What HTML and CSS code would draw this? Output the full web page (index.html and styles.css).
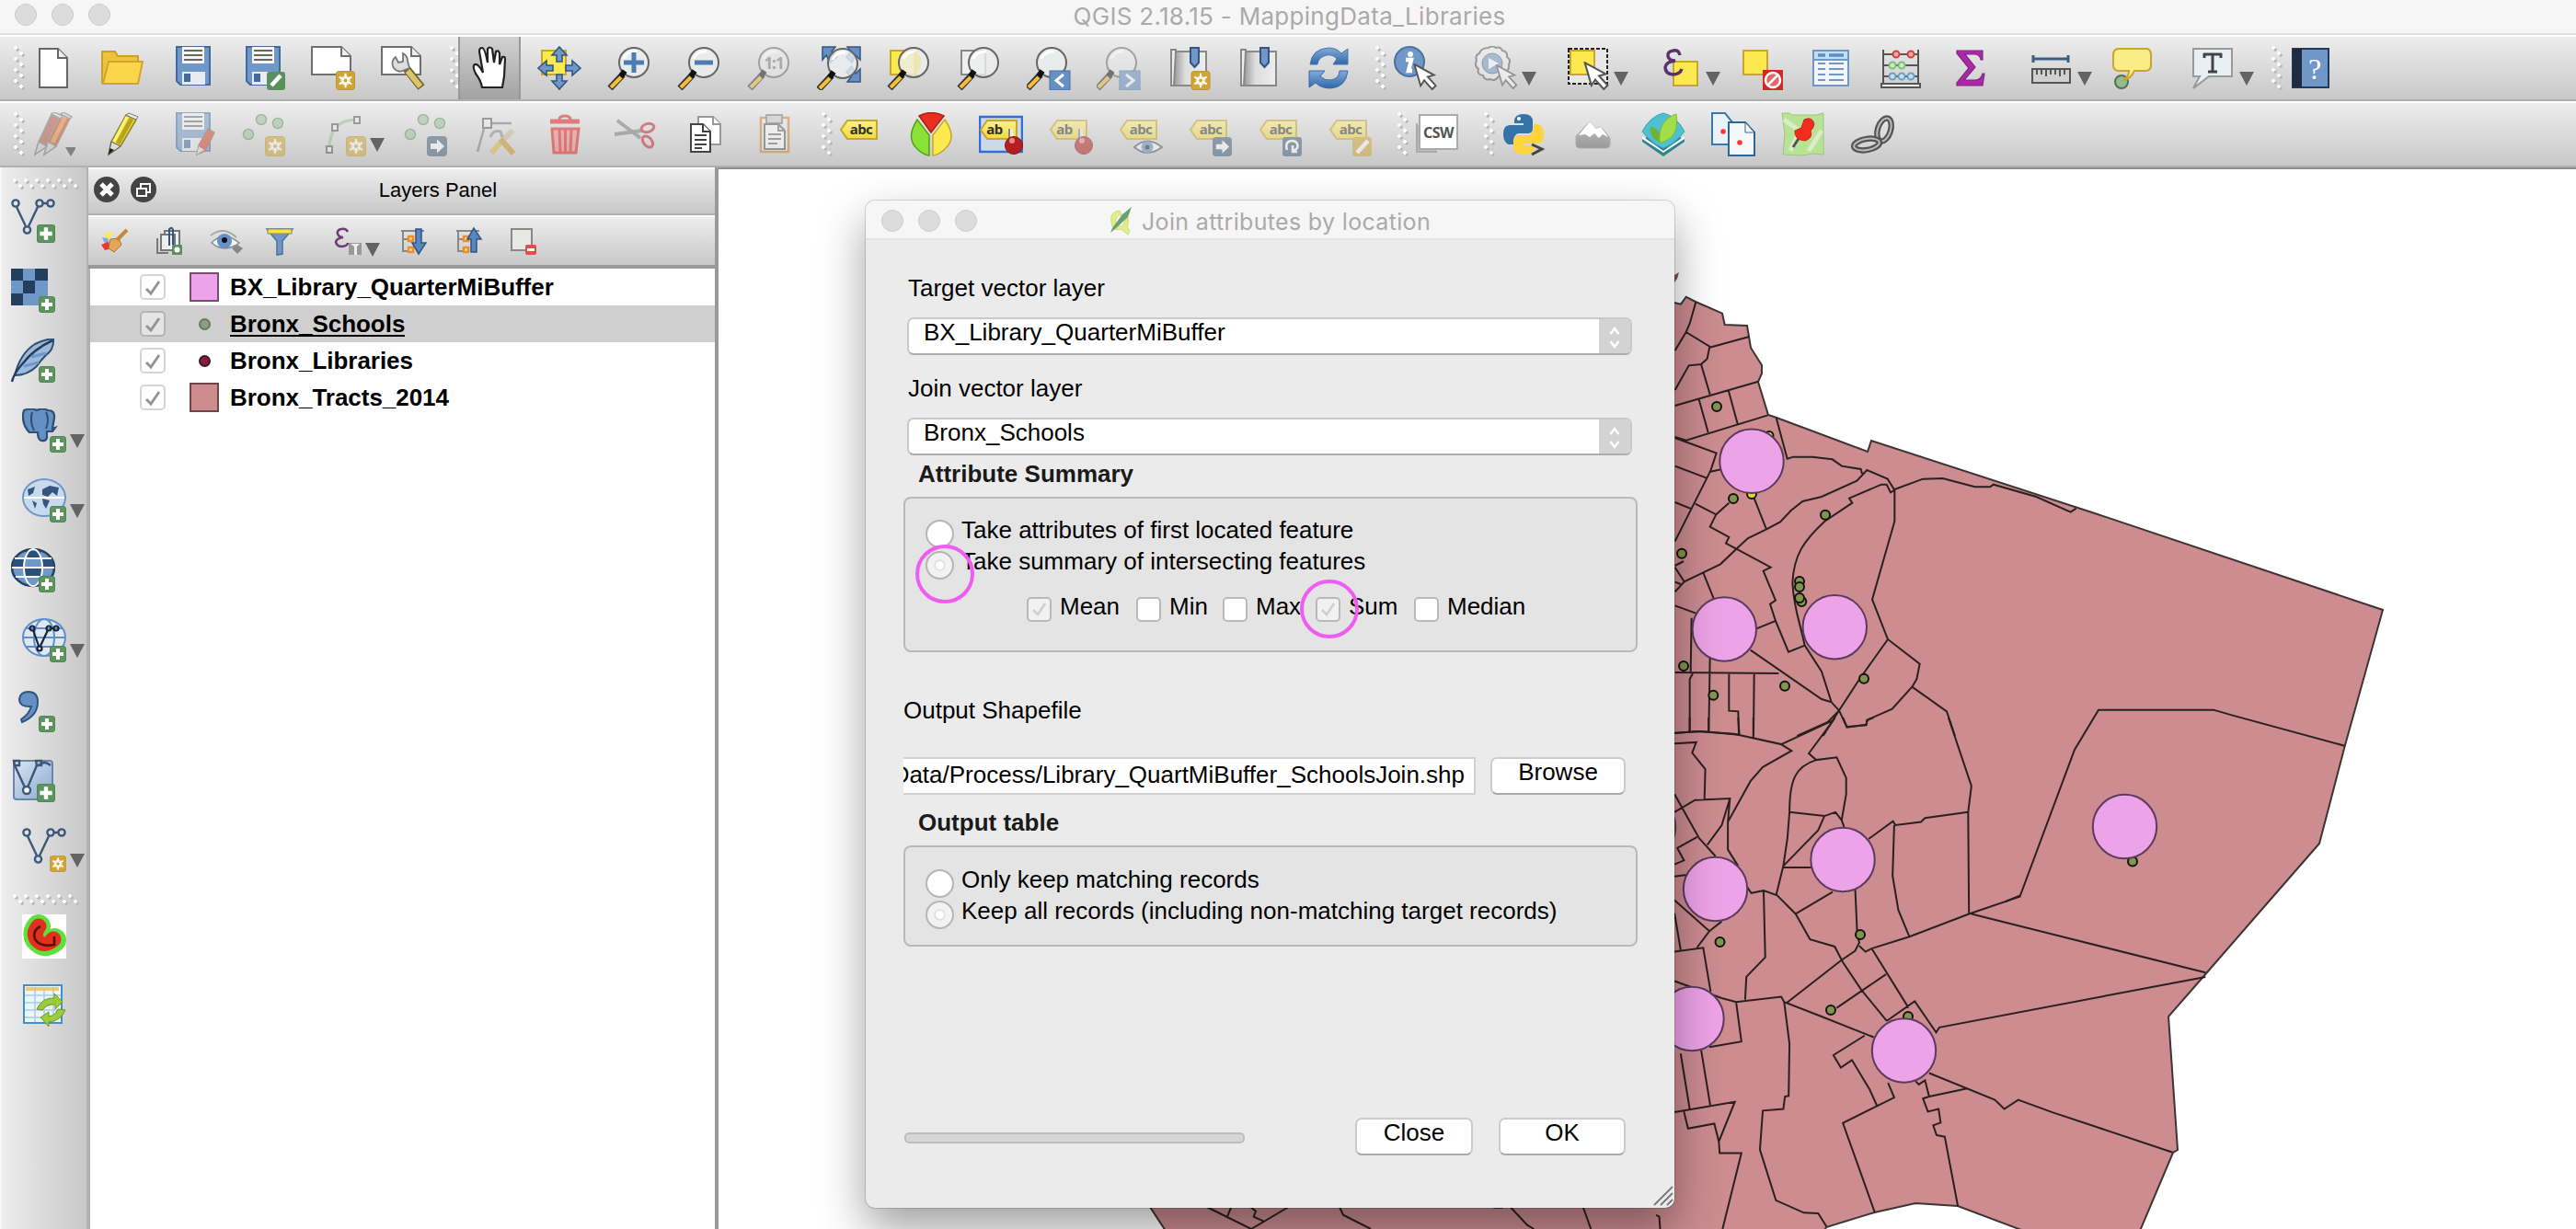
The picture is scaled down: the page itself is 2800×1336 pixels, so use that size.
FILE: index.html
```html
<!DOCTYPE html>
<html lang="en">
<head>
<meta charset="utf-8">
<title>QGIS 2.18.15 - MappingData_Libraries</title>
<link rel="stylesheet" href="styles.css">
</head>
<body>
<svg class="defs" aria-hidden="true">
<defs>
<linearGradient id="gBlue" x1="0" y1="0" x2="0" y2="1"><stop offset="0" stop-color="#84aada"/><stop offset="1" stop-color="#2f67a8"/></linearGradient>
<linearGradient id="gBook" x1="0" y1="0" x2="1" y2="0"><stop offset="0" stop-color="#999"/><stop offset=".35" stop-color="#ddd"/><stop offset="1" stop-color="#eee"/></linearGradient>
<linearGradient id="gTag" x1="0" y1="0" x2="0" y2="1"><stop offset="0" stop-color="#fdf08a"/><stop offset="1" stop-color="#f2da3a"/></linearGradient>
<linearGradient id="gPale" x1="0" y1="0" x2="1" y2="1"><stop offset="0" stop-color="#dde5ee"/><stop offset="1" stop-color="#86a9d4"/></linearGradient>
<linearGradient id="gGrey" x1="0" y1="0" x2="0" y2="1"><stop offset="0" stop-color="#c4c4c4"/><stop offset="1" stop-color="#999"/></linearGradient>

<symbol id="plus" viewBox="0 0 18 18"><rect x=".5" y=".5" width="17" height="17" rx="2.5" fill="#5f9460" stroke="#4d8a4f"/><path d="M9 3V15M3 9H15" stroke="#fff" stroke-width="4"/></symbol>
<symbol id="star" viewBox="0 0 22 22"><rect x=".5" y=".5" width="21" height="21" rx="3" fill="#cfa535" stroke="#bd9526"/><circle cx="11" cy="11" r="5.5" fill="#f4e6b8"/><path d="M11 3V19M4 7L18 15M18 7L4 15" stroke="#fff" stroke-width="2.2"/><circle cx="11" cy="11" r="2" fill="#cfa535"/></symbol>
<symbol id="go" viewBox="0 0 22 22"><rect x=".5" y=".5" width="21" height="21" rx="3" fill="#3f5d77" stroke="#3f5d77"/><path d="M4 8H11V3.500L19 11L11 18.500V14H4Z" fill="#fff"/></symbol>
<symbol id="page" viewBox="0 0 48 48"><path d="M1 1H33L43 11V31H1Z" fill="#fff" stroke="#6f6f6f" stroke-width="2"/><path d="M33 1V11H43" fill="#eee" stroke="#6f6f6f" stroke-width="2"/></symbol>
<symbol id="mag" viewBox="0 0 48 48"><path d="M17 31L3 46" stroke="#333" stroke-width="7"/><path d="M15 34L4 45" stroke="#f6bd35" stroke-width="4"/><circle cx="29" cy="18" r="16" fill="#eceeed" fill-opacity=".8" stroke="#666" stroke-width="2"/><path d="M19 27L15 33" stroke="#111" stroke-width="6"/><path d="M18 14Q22 5 32 6" stroke="#fff" stroke-width="3" fill="none"/></symbol>
<symbol id="cursor" viewBox="0 0 26 30"><path d="M1 1L23 13L16 15L25 25L21 29L12 19L8 25Z" fill="#fff" stroke="#555" stroke-width="2"/></symbol>
<symbol id="vee" viewBox="0 0 48 40"><path d="M6 9L16 30M19 30L29 9M35 5H39" stroke="#3c5878" stroke-width="2.400" fill="none"/><g fill="none" stroke="#3c5878" stroke-width="2.400"><circle cx="5" cy="5" r="3.600"/><circle cx="17.500" cy="34" r="3.600"/><circle cx="31" cy="5" r="3.600"/><circle cx="43" cy="5" r="3.600"/></g></symbol>
<symbol id="tag" viewBox="0 0 48 48"><path d="M2 19L9 9H41V29H9Z" fill="url(#gTag)" stroke="#c7a52e" stroke-width="2"/></symbol>
<symbol id="floppy" viewBox="0 0 48 48"><path d="M6 1H42V42H10L6 38Z" fill="#6f98c9" stroke="#426b9c" stroke-width="2"/><rect x="12" y="1" width="24" height="18" fill="#f4f4f4"/><path d="M14 5H34M14 10H34M14 15H34" stroke="#666" stroke-width="2"/><path d="M12 28H37V42H12Z" fill="#e8ecef"/><rect x="14" y="30" width="7" height="9" fill="#426b9c"/></symbol>
<symbol id="dots" viewBox="0 0 48 48"><g fill="#9cc69d" stroke="#628a66" stroke-width="1.500"><circle cx="22" cy="8" r="5.500"/><circle cx="40" cy="12" r="5.500"/><circle cx="8" cy="24" r="5.500"/></g></symbol>

<symbol id="new" viewBox="0 0 48 48"><path d="M9 3H29L39 13V45H9Z" fill="#fff" stroke="#666" stroke-width="2"/><path d="M29 3V13H39" fill="#eee" stroke="#666" stroke-width="2"/></symbol>
<symbol id="open" viewBox="0 0 48 48"><path d="M1 41V6H15L18 11H40V17" fill="#eec33a" stroke="#c9a02b" stroke-width="2"/><path d="M8 17H45L40 41H2Z" fill="#fbd54b" stroke="#cfa62f" stroke-width="2"/></symbol>
<symbol id="save" viewBox="0 0 48 48"><use href="#floppy"/></symbol>
<symbol id="saveas" viewBox="0 0 48 48"><use href="#floppy"/><rect x="28" y="28" width="20" height="20" rx="3" fill="#5b8f5d"/><path d="M33 43L43 32" stroke="#fff" stroke-width="4.500"/></symbol>
<symbol id="newcomp" viewBox="0 0 48 48"><use href="#page"/><use href="#star" x="27" y="27" width="21" height="21"/></symbol>
<symbol id="compman" viewBox="0 0 48 48"><use href="#page"/><path d="M28 25L44 45" stroke="#6e6230" stroke-width="9"/><path d="M29 27L43 44" stroke="#dcc46a" stroke-width="6"/><path d="M16 12A8 8 0 1 0 26 26L31 24L29 16A9 9 0 0 0 24 8L24 17L19 18Z" fill="#ddd" stroke="#777" stroke-width="1.800"/></symbol>
<symbol id="hand" viewBox="0 0 48 48"><path d="M16 45Q15 38 9 30Q5 22 8 20Q12 19 17 29L13 6Q13 2 16 2Q19 2 22 18V3Q24 0 27 3L29 18L31 6Q34 4 35 8L35 20L38 12Q41 11 41 14L40 33L38 45Z" fill="#fff" stroke="#222" stroke-width="2.200"/></symbol>
<symbol id="pan" viewBox="0 0 48 48"><rect x="5" y="5" width="26" height="26" fill="#fce94f" stroke="#c7a52e" stroke-width="2"/><g fill="#6f97c8" stroke="#34557f" stroke-width="1.600"><path d="M24 1L32 10H27V17H21V10H16Z"/><path d="M24 47L32 38H27V31H21V38H16Z"/><path d="M1 24L10 16V21H17V27H10V32Z"/><path d="M47 24L38 16V21H31V27H38V32Z"/></g></symbol>
<symbol id="zin" viewBox="0 0 48 48"><use href="#mag"/><path d="M29 7V29M18 18H40" stroke="#4c7cb0" stroke-width="5"/></symbol>
<symbol id="zout" viewBox="0 0 48 48"><use href="#mag"/><path d="M19 18H39" stroke="#4c7cb0" stroke-width="5"/></symbol>
<symbol id="zone" viewBox="0 0 48 48"><use href="#mag"/><text x="29" y="25" text-anchor="middle" class="t-one">1:1</text></symbol>
<symbol id="zfull" viewBox="0 0 48 48"><g fill="#6490c4" stroke="#34557f" stroke-width="1.500"><path d="M6 1H20L16 6L22 12L14 18L10 10L6 15Z"/><path d="M47 1H33L37 6L32 12L38 18L42 10L47 15Z"/><path d="M47 39H33L37 34L32 28L38 22L42 30L47 25Z"/></g><use href="#mag" x="-1" y="1"/></symbol>
<symbol id="zsel" viewBox="0 0 48 48"><rect x="4" y="5" width="28" height="26" fill="#fce94f" stroke="#c7a52e" stroke-width="2"/><use href="#mag"/><path d="M29 5V31A14 14 0 0 0 29 5" fill="#efe6a4" opacity=".7"/></symbol>
<symbol id="zlay" viewBox="0 0 48 48"><rect x="5" y="5" width="26" height="26" fill="#eee" stroke="#888" stroke-width="2"/><use href="#mag"/></symbol>
<symbol id="zlast" viewBox="0 0 48 48"><use href="#mag" x="-2"/><rect x="25" y="27" width="22" height="21" fill="#6490c4" stroke="#49719f"/><path d="M40 31L32 37.500L40 44" fill="none" stroke="#fff" stroke-width="3"/></symbol>
<symbol id="znext" viewBox="0 0 48 48"><use href="#mag" x="-2"/><rect x="25" y="27" width="22" height="21" fill="#6490c4" stroke="#49719f"/><path d="M32 31L40 37.500L32 44" fill="none" stroke="#fff" stroke-width="3"/></symbol>
<symbol id="book" viewBox="0 0 48 48"><path d="M5 4H10V43H5Z" fill="#eee" stroke="#888" stroke-width="2"/><path d="M10 6H43V43H8Z" fill="url(#gBook)" stroke="#888" stroke-width="2"/><path d="M26 2H35V18L30.500 23L26 18Z" fill="#6f98c9" stroke="#34557f" stroke-width="2"/></symbol>
<symbol id="booknew" viewBox="0 0 48 48"><use href="#book"/><use href="#star" x="26" y="27" width="22" height="21"/></symbol>
<symbol id="refresh" viewBox="0 0 48 48"><path d="M4 20Q6 3 24 2Q33 2 38 8L45 3V20H29L33 14Q29 9 22 10Q13 12 12 20Z" fill="url(#gBlue)" stroke="#4a78ae"/><path d="M45 27Q43 45 26 46Q16 46 10 40L3 45V27H20L15 33Q20 38 27 37Q36 35 36 27Z" fill="url(#gBlue)" stroke="#3a6aa4"/></symbol>
<symbol id="ident" viewBox="0 0 48 48"><circle cx="18" cy="17" r="16" fill="#6f97c8" stroke="#49719f" stroke-width="2"/><circle cx="19" cy="9" r="3" fill="#fff"/><path d="M14 15H20L17 27H21" fill="none" stroke="#fff" stroke-width="4.500"/><use href="#cursor" x="22" y="19" width="26" height="29"/></symbol>
<symbol id="action" viewBox="0 0 48 48"><path d="M16 2Q20-1 24 2Q29 0 31 5Q37 6 36 12Q41 15 38 20Q39 26 34 28Q33 34 27 33Q23 39 18 36Q12 38 10 32Q3 31 5 25Q0 21 3 16Q1 10 6 8Q8 2 16 2Z" fill="#eee" stroke="#555" stroke-width="2"/><circle cx="20" cy="19" r="11" fill="#6f97c8" stroke="#557"/><path d="M16 13L27 19L16 25Z" fill="#fff"/><use href="#cursor" x="23" y="20" width="25" height="27"/></symbol>
<symbol id="select" viewBox="0 0 48 48"><rect x="3" y="3" width="42" height="38" fill="#e8e8e8" stroke="#222" stroke-width="2" stroke-dasharray="4 2"/><rect x="5" y="5" width="26" height="26" fill="#fce94f" stroke="#c7a52e" stroke-width="2"/><use href="#cursor" x="19" y="17" width="28" height="31"/></symbol>
<symbol id="expr" viewBox="0 0 48 48"><rect x="17" y="17" width="26" height="26" fill="#fce94f" stroke="#c7a52e" stroke-width="2"/><path d="M24 10Q23 4 17 5Q10 6 11 11Q12 16 19 16Q9 17 8 23Q8 30 16 31Q24 31 26 25" fill="none" stroke="#5d3168" stroke-width="3.500"/></symbol>
<symbol id="desel" viewBox="0 0 48 48"><rect x="5" y="5" width="26" height="26" fill="#fce94f" stroke="#c7a52e" stroke-width="2"/><rect x="26" y="26" width="22" height="22" fill="#cf2a27"/><circle cx="37" cy="37" r="8" fill="#e06a67" stroke="#fff" stroke-width="2.500"/><path d="M32 42L42 32" stroke="#fff" stroke-width="2.500"/></symbol>
<symbol id="table" viewBox="0 0 48 48"><rect x="5" y="5" width="38" height="38" fill="#f2f5f8" stroke="#6f97c8" stroke-width="2"/><rect x="6" y="6" width="36" height="9" fill="#bfe0f2"/><path d="M5 15H43" stroke="#6f97c8" stroke-width="2"/><path d="M10 10H18M22 10H38" stroke="#5d8dc6" stroke-width="3.500"/><path d="M10 19H18M22 19H38M10 25H18M22 25H38M10 31H18M22 31H38M10 37H18M22 37H38" stroke="#6f97c8" stroke-width="2"/></symbol>
<symbol id="abacus" viewBox="0 0 48 48"><path d="M5 4V41M43 4V41M5 9H43M5 21H43M5 33H43" stroke="#555" stroke-width="2"/><rect x="3" y="41" width="42" height="4" fill="#eee" stroke="#555" stroke-width="2"/><g fill="#f4a7a5" stroke="#c44" stroke-width="2"><circle cx="19" cy="9" r="3.500"/><circle cx="35" cy="9" r="3.500"/></g><g fill="#c4f0c0" stroke="#7fbf7d" stroke-width="2"><circle cx="15" cy="21" r="3.500"/><circle cx="25" cy="21" r="3.500"/></g><g fill="#c4dff0" stroke="#6d9fc0" stroke-width="2"><circle cx="15" cy="33" r="3.500"/><circle cx="25" cy="33" r="3.500"/><circle cx="35" cy="33" r="3.500"/></g></symbol>
<symbol id="sigma" viewBox="0 0 48 48"><path d="M9 5H37V15H35Q34 9 28 9H18L29 23L17 37H29Q35 37 37 30H39L37 43H9V40L22 24L9 8Z" fill="#ae26a9" stroke="#7c2b7c" stroke-width="1.200"/></symbol>
<symbol id="measure" viewBox="0 0 48 48"><path d="M4 14H42M4 10V18M42 10V18" stroke="#3f5d80" stroke-width="3"/><rect x="3" y="25" width="41" height="15" fill="#d0d0d0" stroke="#555" stroke-width="2"/><path d="M8 26V31M13 26V31M18 26V33M23 26V31M28 26V31M33 26V33M38 26V31" stroke="#555" stroke-width="2"/></symbol>
<symbol id="tip" viewBox="0 0 48 48"><circle cx="12" cy="39" r="7" fill="#93bd8c" stroke="#4f7350" stroke-width="2"/><path d="M9 3H39Q44 3 44 10V20Q44 27 38 27H26Q22 36 14 37Q20 33 20 27H9Q3 27 3 20V10Q3 3 9 3Z" fill="#faec86" stroke="#c7a52e" stroke-width="2"/></symbol>
<symbol id="annot" viewBox="0 0 48 48"><path d="M2 3H44V33H19L2 46L9 33H2Z" fill="#e9f0f4" stroke="#999" stroke-width="2"/><path d="M13 9H33M14 8V13M32 8V13M23 9V28M18 28H28" stroke="#444" stroke-width="3"/></symbol>
<symbol id="help" viewBox="0 0 48 48"><rect x="4" y="3" width="39" height="42" fill="#6f98c9" stroke="#223a58" stroke-width="2"/><rect x="4" y="3" width="10" height="42" fill="#1d2c40"/><text x="28" y="36" text-anchor="middle" class="t-help">?</text></symbol>

<symbol id="pencils" viewBox="0 0 48 48"><g stroke="#777" stroke-width="1.500"><path d="M4 46L8 32L22 2L32 7L17 37Z" fill="#b4503c"/><path d="M14 46L18 32L32 2L42 7L27 37Z" fill="#cc3a20"/><path d="M4 46L8 32L17 37ZM14 46L18 32L27 37Z" fill="#ccc"/><path d="M22 2L25 0L34 4L32 7ZM32 2L35 0L44 5L42 7Z" fill="#eee"/></g><path d="M23 33L37 5" stroke="#e8822c" stroke-width="5"/><path d="M37 38H49L43 48Z" fill="#333"/></symbol>
<symbol id="pencil" viewBox="0 0 48 48"><path d="M8 46L11 32L27 3L38 8L21 37Z" fill="#f0dc3c" stroke="#8e8426" stroke-width="1.500"/><path d="M18 34L33 7" stroke="#b5a51f" stroke-width="5"/><path d="M14 32L28 5" stroke="#fff27a" stroke-width="3"/><path d="M27 3L30 1L40 5L38 8Z" fill="#eee" stroke="#777"/><path d="M8 46L11 32L21 37Z" fill="#ddd" stroke="#555"/><path d="M8 46L9.500 39L14 41Z" fill="#222"/></symbol>
<symbol id="savedit" viewBox="0 0 48 48"><use href="#floppy"/><path d="M28 46L30 36L40 18L47 22L37 42Z" fill="#d8401d" stroke="#8e5a4a" stroke-width="1.500"/><path d="M28 46L30 37L36 41Z" fill="#ddd"/></symbol>
<symbol id="addf" viewBox="0 0 48 48"><use href="#dots"/><use href="#star" x="26" y="26" width="22" height="22"/></symbol>
<symbol id="circ" viewBox="0 0 48 48"><path d="M8 40Q8 8 38 8" fill="none" stroke="#8ec490" stroke-width="3"/><g fill="#eee" stroke="#555" stroke-width="2"><rect x="5" y="37" width="6" height="7"/><rect x="11" y="13" width="6" height="7"/><rect x="35" y="5" width="6" height="7"/></g><use href="#star" x="26" y="26" width="22" height="22"/></symbol>
<symbol id="movef" viewBox="0 0 48 48"><use href="#dots"/><use href="#go" x="26" y="26" width="22" height="22"/></symbol>
<symbol id="node" viewBox="0 0 48 48"><path d="M16 12H42M12 18L5 43" stroke="#777" stroke-width="2.500"/><rect x="11" y="7" width="9" height="10" fill="#eee" stroke="#555" stroke-width="2"/><path d="M20 44L33 30M33 30L43 20" stroke="#dcb93a" stroke-width="6"/><path d="M33 30L44 20" stroke="#bbb" stroke-width="4"/><path d="M30 29L44 45" stroke="#c99320" stroke-width="6"/><path d="M19 27Q22 19 30 21L32 27" fill="none" stroke="#888" stroke-width="3"/></symbol>
<symbol id="trash" viewBox="0 0 48 48"><g fill="none" stroke="#e01818" stroke-width="3"><path d="M8 10H40" stroke-width="5"/><path d="M18 8Q18 4 24 4Q30 4 30 8"/><path d="M10 18H39L36 44H12Z" fill="#e88"/><path d="M18 18L19 43M24.500 18V43M31 18L30 43"/></g></symbol>
<symbol id="cut" viewBox="0 0 48 48"><path d="M5 9L30 28M2 24L32 20" stroke="#777" stroke-width="4"/><g fill="none" stroke="#c11c28" stroke-width="3"><ellipse cx="38" cy="17" rx="7" ry="4.500" transform="rotate(-15 38 17)"/><ellipse cx="38" cy="32" rx="7" ry="4.500" transform="rotate(50 38 32)"/></g></symbol>
<symbol id="copy" viewBox="0 0 48 48"><g fill="#fff" stroke="#999" stroke-width="2"><path d="M17 5H33L41 13V35H17Z"/><path d="M33 5V13H41"/></g><g fill="#fff" stroke="#444" stroke-width="2"><path d="M9 13H22L30 21V43H9Z"/><path d="M22 13V21H30M13 25H26M13 30H26M13 35H26M13 39H21"/></g></symbol>
<symbol id="paste" viewBox="0 0 48 48"><rect x="9" y="6" width="30" height="37" fill="#ececec" stroke="#c9822b" stroke-width="2.500"/><rect x="15" y="3" width="17" height="9" fill="#ccc" stroke="#777" stroke-width="2"/><path d="M13 13H28L35 20V40H13Z" fill="#fff" stroke="#555" stroke-width="2"/><path d="M28 13V20H35M17 24H31M17 29H31M17 34H27" fill="none" stroke="#666" stroke-width="2"/></symbol>
<symbol id="lbl" viewBox="0 0 48 48"><use href="#tag"/><text x="24" y="24" text-anchor="middle" class="t-abc">abc</text></symbol>
<symbol id="pie" viewBox="0 0 48 48"><path d="M24 22L11 4Q24-3 38 4Z" fill="#e8301f" stroke="#b21d12" stroke-width="1.500"/><path d="M22 25L9 8Q-4 28 9 40Q15 46 22 47Z" fill="#8ae234" stroke="#55a01c" stroke-width="1.500"/><path d="M26 25L39 8Q53 28 39 40Q33 46 26 47Z" fill="#fce94f" stroke="#c7a52e" stroke-width="1.500"/></symbol>
<symbol id="pinned" viewBox="0 0 48 48"><use href="#tag"/><text x="17" y="24" text-anchor="middle" class="t-abc">ab</text><path d="M34 18L36 30" stroke="#eee" stroke-width="5"/><path d="M33 18V28" stroke="#666" stroke-width="1.500"/><circle cx="38" cy="36" r="9.500" fill="#b51f20" stroke="#7d1415"/><circle cx="36" cy="31" r="3" fill="#e88"/></symbol>
<symbol id="pinhi" viewBox="0 0 48 48"><rect x="1" y="5" width="46" height="38" fill="#ccd9e8" stroke="#2f6fd6" stroke-width="2.500"/><use href="#pinned"/></symbol>
<symbol id="lbleye" viewBox="0 0 48 48"><use href="#lbl"/><path d="M17 38Q31 25 47 38Q31 50 17 38Z" fill="#fff" stroke="#555" stroke-width="2"/><circle cx="31" cy="38" r="6.500" fill="#5f8fc4"/><circle cx="31" cy="38" r="2.500" fill="#222"/></symbol>
<symbol id="lblmove" viewBox="0 0 48 48"><use href="#lbl"/><use href="#go" x="26" y="27" width="21" height="21"/></symbol>
<symbol id="lblrot" viewBox="0 0 48 48"><use href="#lbl"/><rect x="26" y="27" width="21" height="21" rx="3" fill="#3f5d77"/><path d="M31 41Q28 31 37 31Q44 32 42 39L38 42M37 36V43H42" fill="none" stroke="#fff" stroke-width="2.600"/></symbol>
<symbol id="lbledit" viewBox="0 0 48 48"><use href="#lbl"/><rect x="26" y="27" width="21" height="21" rx="3" fill="#cfa535"/><path d="M31 44L43 31" stroke="#fff" stroke-width="4.500"/></symbol>
<symbol id="csw" viewBox="0 0 48 48"><path d="M2 12V43H24" fill="#bbb" stroke="#aaa" stroke-width="2"/><rect x="5" y="3" width="41" height="37" fill="#fff" stroke="#aaa" stroke-width="2"/><text x="25.500" y="28" text-anchor="middle" class="t-csw">CSW</text></symbol>
<symbol id="python" viewBox="0 0 48 48"><path d="M14 10Q14 2 24 2Q34 2 34 10V18Q34 23 28 23H18Q13 24 13 35H8Q2 33 2 24Q2 14 9 14H24V12H14Z" fill="#3572a5"/><circle cx="19" cy="7" r="2" fill="#fff"/><path d="M35 13H40Q46 15 46 25Q46 34 39 34H25V37H36Q36 46 25 46Q13 46 13 38V30Q14 25 20 25H29Q34 24 35 18Z" fill="#ffd43b"/><path d="M33 35L44 40L33 46" fill="none" stroke="#444" stroke-width="3"/></symbol>
<symbol id="mount" viewBox="0 0 48 48"><path d="M5 26L11 20L20 10L27 18L32 16L42 28V35Q42 39 38 39H9Q5 39 5 35Z" fill="url(#gGrey)" stroke="#aaa"/><path d="M8 25L20 10L27 18L32 16L40 27L34 24L30 28L25 23L20 27L15 24Z" fill="#fff"/></symbol>
<symbol id="leaf" viewBox="0 0 48 48"><path d="M1 31L24 46L47 31L42 27H6Z" fill="#2a8290"/><path d="M1 26L24 42L47 26V30L24 46L1 30Z" fill="#fff"/><path d="M1 29L24 44L47 29V32L24 48L1 32Z" fill="#2a8290"/><path d="M1 21Q10 4 24 1Q38 4 47 21Q36 35 24 39Q12 35 1 21Z" fill="#4fc0d2" stroke="#33a3b5"/><path d="M20 33Q8 27 10 15Q20 18 22 28Z" fill="#6db33a"/><path d="M20 33Q18 8 38 2Q42 29 20 33Z" fill="#a4dd4a" stroke="#7fb933"/></symbol>
<symbol id="pages" viewBox="0 0 48 48"><path d="M1 1H15L24 12V35H1Z" fill="#e9f2f9" stroke="#3878ad" stroke-width="2"/><path d="M19 11H37L47 22V47H19Z" fill="#f4f8fb" stroke="#2d6594" stroke-width="2"/><path d="M37 11V22H47Z" fill="#fff" stroke="#2d6594"/><g fill="#f33"><circle cx="13" cy="21" r="2.800"/><circle cx="31" cy="33" r="2.800"/></g></symbol>
<symbol id="pinmap" viewBox="0 0 48 48"><path d="M1 1H9L12 3H38L46 1V46L34 45L24 47L2 46L4 24Z" fill="#b9e394" stroke="#9cc67c"/><path d="M3 8L20 20L10 42M30 42L44 20" fill="none" stroke="#dcecc8" stroke-width="5"/><path d="M20 27L13 38" stroke="#555" stroke-width="3"/><path d="M25 8Q34 4 36 13Q35 18 32 20Q35 28 26 31Q14 30 15 20L22 17Z" fill="#f22d1e" stroke="#c22"/></symbol>
<symbol id="link" viewBox="0 0 48 48"><g fill="none"><ellipse cx="36" cy="19" rx="7" ry="13" transform="rotate(18 36 19)" stroke="#555" stroke-width="6.500"/><ellipse cx="36" cy="19" rx="7" ry="13" transform="rotate(18 36 19)" stroke="#bbb" stroke-width="2"/><ellipse cx="17" cy="35" rx="14" ry="6" transform="rotate(-10 17 35)" stroke="#555" stroke-width="6.500"/><ellipse cx="17" cy="35" rx="14" ry="6" transform="rotate(-10 17 35)" stroke="#bbb" stroke-width="2"/></g></symbol>

<symbol id="addvec" viewBox="0 0 48 48"><use href="#vee" x="0" y="0" width="48" height="40"/><use href="#plus" x="28" y="28" width="20" height="20"/></symbol>
<symbol id="addras" viewBox="0 0 48 48"><rect width="40" height="40" fill="#6f97c8"/><path d="M0 0H13V13H0ZM26 0H40V13H26ZM13 13H26V27H13ZM0 27H13V40H0Z" fill="#243e5e"/><use href="#plus" x="30" y="30" width="18" height="18"/></symbol>
<symbol id="feather" viewBox="0 0 48 48"><path d="M4 40Q10 16 26 6Q36 1 46 0Q47 12 38 18Q32 24 28 30Q18 40 4 40Z" fill="#9dbadb" stroke="#2f4e74" stroke-width="2"/><path d="M1 47Q3 38 12 28Q24 12 45 2" fill="none" stroke="#243e5e" stroke-width="2.500"/><path d="M14 30L30 26M22 20L38 16" stroke="#6f97c8" stroke-width="3"/><use href="#plus" x="30" y="30" width="18" height="18"/></symbol>
<symbol id="pg" viewBox="0 0 48 48"><path d="M2 2Q10-1 16 2Q22-1 28 2Q36 2 35 10L33 22L36 21L33 25H27V32Q26 36 21 35Q17 34 17 26L8 26Q0 18 1 6Z" fill="#6490c4" stroke="#2f4e74" stroke-width="2.200"/><path d="M11 4Q8 14 13 24M26 4Q30 12 26 22" fill="none" stroke="#2f4e74" stroke-width="2"/><use href="#plus" x="30" y="30" width="18" height="18"/></symbol>
<symbol id="earth" viewBox="0 0 48 48"><ellipse cx="24" cy="21" rx="23" ry="20" fill="#c7daee" stroke="#6f97c8" stroke-width="2"/><path d="M6 12L14 9L12 16L7 19ZM22 12L30 8L40 10L38 19L33 15L28 20L22 18ZM11 24L16 27L14 33ZM22 22L30 24L26 33L23 28Z" fill="#34557f"/><path d="M2 21H46" stroke="#fff" stroke-width="2"/><use href="#plus" x="30" y="30" width="18" height="18"/></symbol>
<symbol id="wms" viewBox="0 0 48 48"><ellipse cx="24" cy="21" rx="23" ry="20" fill="#6f97c8" stroke="#243e5e" stroke-width="2.500"/><path d="M3 12H14V20H2ZM34 12H45L46 20H34ZM16 3H32V11H18ZM15 22H33V31H15Z" fill="#2c4f7c"/><path d="M4 11H44M1 21H47M5 31H43" stroke="#fff" stroke-width="2"/><ellipse cx="24" cy="21" rx="10" ry="20" fill="none" stroke="#fff" stroke-width="2"/><use href="#plus" x="30" y="30" width="18" height="18"/></symbol>
<symbol id="wfs" viewBox="0 0 48 48"><g fill="none" stroke="#5f8fca" stroke-width="2"><ellipse cx="24" cy="21" rx="23" ry="20" fill="#dfe7f0"/><ellipse cx="24" cy="21" rx="11" ry="20"/><path d="M4 11H44M1 21H47M5 31H43"/></g><g fill="none" stroke="#142338" stroke-width="2.200"><circle cx="11" cy="11" r="2.500"/><circle cx="19" cy="33" r="2.500"/><circle cx="29" cy="11" r="2.500"/><circle cx="37" cy="11" r="2.500"/><path d="M12 13L18 30M20 30L28 13M31 11H35"/></g><use href="#plus" x="30" y="30" width="18" height="18"/></symbol>
<symbol id="comma" viewBox="0 0 48 48"><path d="M19 4Q29 4 29 15Q29 30 12 37L11 34Q20 28 22 20Q9 21 9 12Q10 4 19 4Z" fill="#6490c4" stroke="#2f5580" stroke-width="2"/><use href="#plus" x="30" y="30" width="18" height="18"/></symbol>
<symbol id="virt" viewBox="0 0 48 48"><rect x="3" y="3" width="42" height="42" rx="3" fill="url(#gPale)" stroke="#6d86a5" stroke-width="2"/><path d="M4 8L15 32M18 32L28 8M30 8Q36 2 43 8" stroke="#3c5878" stroke-width="2.400" fill="none"/><g fill="#fff" stroke="#3c5878" stroke-width="2.400"><circle cx="17" cy="35" r="4"/><path d="M3 3H9V8H4ZM27 3H33V8H28Z" fill="none"/></g><use href="#plus" x="28" y="28" width="20" height="20"/></symbol>
<symbol id="newvec" viewBox="0 0 48 48"><use href="#vee" width="48" height="40"/><use href="#star" x="30" y="30" width="18" height="18"/></symbol>
<symbol id="heat" viewBox="0 0 48 48"><rect width="48" height="48" fill="#fff"/><path d="M18 13Q12 20 16 27Q24 37 35 28" fill="none" stroke="#5fe03c" stroke-width="26" stroke-linecap="round"/><path d="M18 13Q12 20 16 27Q24 36 34 27" fill="none" stroke="#e03020" stroke-width="17" stroke-linecap="round"/><path d="M27 17L24 24" stroke="#5fe03c" stroke-width="3"/><path d="M20 13Q11 17 14 27Q20 36 35 33V24" fill="none" stroke="#5a0f0a" stroke-width="2.500"/></symbol>
<symbol id="tabref" viewBox="0 0 48 48"><rect x="2" y="1" width="41" height="41" fill="#eaf6fc" stroke="#3f93c4" stroke-width="2"/><path d="M4 5H40" stroke="#fcc560" stroke-width="4"/><path d="M3 12H42M3 20H42M3 28H42M3 36H42M14 3V41M24 3V41M34 3V41" stroke="#a8cbe6" stroke-width="1.500"/><path d="M16 27Q22 14 35 15L35 10L44 19L36 27V22Q27 21 22 28Z" fill="#9ccc3c" stroke="#6b9a1f"/><path d="M47 28Q42 40 29 41V46L20 36L29 30V35Q36 34 39 27Z" fill="#9ccc3c" stroke="#6b9a1f"/></symbol>

<symbol id="brush" viewBox="0 0 32 32"><path d="M5 9L12 6L16 9L8 14Z" fill="#fce94f"/><path d="M3 12L9 13L12 20L5 17Z" fill="#7fa9dc"/><path d="M2 20L9 17L14 24L6 26Z" fill="#e33"/><path d="M12 14L21 13L24 20L16 28L10 24Z" fill="#e3a857" stroke="#a8752b"/><path d="M19 15L30 4" stroke="#c58a36" stroke-width="4"/></symbol>
<symbol id="addgrp" viewBox="0 0 32 32"><g fill="#eee" stroke="#777" stroke-width="2"><path d="M11 5H27V23H11Z"/><path d="M7 9H22V26H7Z"/></g><path d="M3 13V29H15" fill="none" stroke="#777" stroke-width="2"/><path d="M16 21V3Q19 0 20 4V20" fill="none" stroke="#34557f" stroke-width="2"/><rect x="19" y="20" width="11" height="11" rx="1" fill="#5b8f5d"/><circle cx="24.500" cy="25.500" r="3" fill="#fff"/></symbol>
<symbol id="eye" viewBox="0 0 36 32"><path d="M1 10Q15-1 29 12" fill="none" stroke="#aaa" stroke-width="2"/><path d="M2 18Q15 4 32 18Q16 30 2 18Z" fill="#f4f4f4" stroke="#888" stroke-width="1.500"/><circle cx="16" cy="16" r="8" fill="#6591c6"/><circle cx="16" cy="15" r="3" fill="#111"/><path d="M24 24L30 20L36 24L30 30Z" fill="#888"/></symbol>
<symbol id="funnel" viewBox="0 0 32 32"><path d="M2 3H30L19 16V30L13 31V16Z" fill="#6f98c9" stroke="#49719f" stroke-width="1.500"/><rect x="3" y="3" width="26" height="5" fill="#f7e23e" stroke="#8a8a55"/></symbol>
<symbol id="epsf" viewBox="0 0 32 32"><path d="M16 6Q14 2 9 3Q4 4 5 8Q6 12 11 12Q4 13 3 17Q4 22 10 22Q16 21 16 18" fill="none" stroke="#6b3b77" stroke-width="2.600"/><path d="M17 18H31V31H17Z" fill="#999"/><path d="M19 19H29L26 22V31H23V22Z" fill="#eee"/></symbol>
<symbol id="expand" viewBox="0 0 32 32"><path d="M4 5H29M6 5V27H12M6 14H12" fill="none" stroke="#888" stroke-width="2"/><g fill="#fce0a0" stroke="#f08c2c" stroke-width="2.500"><rect x="12" y="11" width="5" height="5"/><rect x="12" y="23" width="5" height="5"/></g><path d="M20 3H26V18H31L23 30L16 18H20Z" fill="#5687c0" stroke="#2f5580" stroke-width="1.500"/></symbol>
<symbol id="collapse" viewBox="0 0 32 32"><path d="M4 5H29M6 5V27H12M6 14H12" fill="none" stroke="#888" stroke-width="2"/><g fill="#fce0a0" stroke="#f08c2c" stroke-width="2.500"><rect x="12" y="11" width="5" height="5"/><rect x="12" y="23" width="5" height="5"/></g><path d="M20 28H26V14H31L23 2L16 14H20Z" fill="#5687c0" stroke="#2f5580" stroke-width="1.500"/></symbol>
<symbol id="remove" viewBox="0 0 32 32"><rect x="4" y="3" width="22" height="23" fill="#e8e8e4" stroke="#888" stroke-width="2"/><rect x="19" y="20" width="12" height="11" rx="2" fill="#e94b4b"/><path d="M21 25.500H29" stroke="#fff" stroke-width="3"/></symbol>
</defs>
</svg>

<div class="window">
  <header class="titlebar">
    <div class="lights"><i></i><i></i><i></i></div>
    <h1 class="titlebar-text">QGIS 2.18.15 - MappingData_Libraries</h1>
  </header>

  <div class="toolbar">
    <span class="grip"></span>
    <span class="tool"><svg><use href="#new"/></svg></span>
    <span class="tool"><svg><use href="#open"/></svg></span>
    <span class="tool"><svg><use href="#save"/></svg></span>
    <span class="tool"><svg><use href="#saveas"/></svg></span>
    <span class="tool"><svg><use href="#newcomp"/></svg></span>
    <span class="tool"><svg><use href="#compman"/></svg></span>
    <span class="grip"></span>
    <span class="tool pressed"><svg><use href="#hand"/></svg></span>
    <span class="tool"><svg><use href="#pan"/></svg></span>
    <span class="tool"><svg><use href="#zin"/></svg></span>
    <span class="tool"><svg><use href="#zout"/></svg></span>
    <span class="tool dim"><svg><use href="#zone"/></svg></span>
    <span class="tool"><svg><use href="#zfull"/></svg></span>
    <span class="tool"><svg><use href="#zsel"/></svg></span>
    <span class="tool"><svg><use href="#zlay"/></svg></span>
    <span class="tool"><svg><use href="#zlast"/></svg></span>
    <span class="tool dim"><svg><use href="#znext"/></svg></span>
    <span class="tool"><svg><use href="#booknew"/></svg></span>
    <span class="tool"><svg><use href="#book"/></svg></span>
    <span class="tool"><svg><use href="#refresh"/></svg></span>
    <span class="grip"></span>
    <span class="tool"><svg><use href="#ident"/></svg></span>
    <span class="tool menu dim"><svg><use href="#action"/></svg></span>
    <span class="tool menu"><svg><use href="#select"/></svg></span>
    <span class="tool menu"><svg><use href="#expr"/></svg></span>
    <span class="tool"><svg><use href="#desel"/></svg></span>
    <span class="tool"><svg><use href="#table"/></svg></span>
    <span class="tool"><svg><use href="#abacus"/></svg></span>
    <span class="tool"><svg><use href="#sigma"/></svg></span>
    <span class="tool menu"><svg><use href="#measure"/></svg></span>
    <span class="tool"><svg><use href="#tip"/></svg></span>
    <span class="tool menu"><svg><use href="#annot"/></svg></span>
    <span class="grip"></span>
    <span class="tool"><svg><use href="#help"/></svg></span>
  </div>

  <div class="toolbar">
    <span class="grip"></span>
    <span class="tool dim"><svg><use href="#pencils"/></svg></span>
    <span class="tool"><svg><use href="#pencil"/></svg></span>
    <span class="tool dim"><svg><use href="#savedit"/></svg></span>
    <span class="tool dim"><svg><use href="#addf"/></svg></span>
    <span class="tool menu dim"><svg><use href="#circ"/></svg></span>
    <span class="tool dim"><svg><use href="#movef"/></svg></span>
    <span class="tool dim"><svg><use href="#node"/></svg></span>
    <span class="tool dim"><svg><use href="#trash"/></svg></span>
    <span class="tool dim"><svg><use href="#cut"/></svg></span>
    <span class="tool"><svg><use href="#copy"/></svg></span>
    <span class="tool dim"><svg><use href="#paste"/></svg></span>
    <span class="grip"></span>
    <span class="tool"><svg><use href="#lbl"/></svg></span>
    <span class="tool"><svg><use href="#pie"/></svg></span>
    <span class="tool"><svg><use href="#pinhi"/></svg></span>
    <span class="tool dim"><svg><use href="#pinned"/></svg></span>
    <span class="tool dim"><svg><use href="#lbleye"/></svg></span>
    <span class="tool dim"><svg><use href="#lblmove"/></svg></span>
    <span class="tool dim"><svg><use href="#lblrot"/></svg></span>
    <span class="tool dim"><svg><use href="#lbledit"/></svg></span>
    <span class="grip"></span>
    <span class="tool"><svg><use href="#csw"/></svg></span>
    <span class="grip"></span>
    <span class="tool"><svg><use href="#python"/></svg></span>
    <span class="tool"><svg><use href="#mount"/></svg></span>
    <span class="tool"><svg><use href="#leaf"/></svg></span>
    <span class="tool"><svg><use href="#pages"/></svg></span>
    <span class="tool"><svg><use href="#pinmap"/></svg></span>
    <span class="tool"><svg><use href="#link"/></svg></span>
  </div>

  <div class="work">
    <nav class="sidebar">
      <span class="grip-h"></span>
      <span class="side"><svg><use href="#addvec"/></svg></span>
      <span class="side"><svg><use href="#addras"/></svg></span>
      <span class="side"><svg><use href="#feather"/></svg></span>
      <span class="side wide"><svg><use href="#pg"/></svg><b></b></span>
      <span class="side wide"><svg><use href="#earth"/></svg><b></b></span>
      <span class="side"><svg><use href="#wms"/></svg></span>
      <span class="side wide"><svg><use href="#wfs"/></svg><b></b></span>
      <span class="side"><svg><use href="#comma"/></svg></span>
      <span class="side"><svg><use href="#virt"/></svg></span>
      <span class="side wide"><svg><use href="#newvec"/></svg><b></b></span>
      <span class="grip-h"></span>
      <span class="side wide"><svg><use href="#heat"/></svg></span>
      <span class="side wide"><svg><use href="#tabref"/></svg></span>
    </nav>

    <section class="panel">
      <div class="panel-title">
        <svg class="pbtn" viewBox="0 0 28 28"><circle cx="14" cy="14" r="14" fill="#444"/><path d="M8 8L20 20M20 8L8 20" stroke="#fff" stroke-width="5"/></svg>
        <svg class="pbtn" viewBox="0 0 28 28"><circle cx="14" cy="14" r="14" fill="#444"/><path d="M11 12V8H21V17H18" fill="none" stroke="#fff" stroke-width="2"/><rect x="7" y="13" width="10" height="8" fill="none" stroke="#fff" stroke-width="2"/></svg>
        <h2>Layers Panel</h2>
      </div>
      <div class="panel-tools">
        <span class="ptool"><svg><use href="#brush"/></svg></span>
        <span class="ptool"><svg><use href="#addgrp"/></svg></span>
        <span class="ptool"><svg class="eye"><use href="#eye"/></svg></span>
        <span class="ptool"><svg><use href="#funnel"/></svg></span>
        <span class="ptool pmenu"><svg><use href="#epsf"/></svg></span>
        <span class="ptool"><svg><use href="#expand"/></svg></span>
        <span class="ptool"><svg><use href="#collapse"/></svg></span>
        <span class="ptool"><svg><use href="#remove"/></svg></span>
      </div>
      <ul class="tree">
        <li><svg class="check"><path d="M7 15L12 20L21 7"/></svg><span class="sym"><i class="sw pink"></i></span><span class="lname">BX_Library_QuarterMiBuffer</span></li>
        <li class="current"><svg class="check"><path d="M7 15L12 20L21 7"/></svg><span class="sym"><i class="pt green"></i></span><span class="lname">Bronx_Schools</span></li>
        <li><svg class="check"><path d="M7 15L12 20L21 7"/></svg><span class="sym"><i class="pt wine"></i></span><span class="lname">Bronx_Libraries</span></li>
        <li><svg class="check"><path d="M7 15L12 20L21 7"/></svg><span class="sym"><i class="sw rose"></i></span><span class="lname">Bronx_Tracts_2014</span></li>
      </ul>
    </section>

    <main class="canvas">
      <svg class="map" viewBox="781 184 2019 1152">
        <path class="land" d="M1815 328L1820.700 329.300 1827 330.700 1832.700 322.700 1843 328 1872 340.700 1874.700 353 1899 354 1901 366 1903 378 1915 397 1915 406 1911 415 1922 451 1931 454 2030 491 2034 479 2280 559 2590 663 2549 810 2521 917 2466 980 2399 1057 2357 1105 2367 1250 2362 1253 2326 1338 2197 1337 2128 1311 2082 1308 2037.500 1318 1985 1334 1983 1338H1267L1250 1312L1240 1290 1500 700Z"/>
        <path d="M1820 299L1825 296 1823 303 1820 307Z" fill="#7a5555"/>
        <g class="edge" transform="translate(1800 280) scale(.33333)">
          <path d="M130 145L110 215 98 243 62 303M98 243L175 290 167 330 147 348 107 352 62 432M175 293L304 258M147 348L176 446M62 483L334 404M140 463L170 570M236 432L266 542M62 585L98 596 365 514M392 522L428 656 448 650 510 650 575 658 606 680 668 690 672 705M62 588L197 638 178 695 62 925M178 698L215 690M62 680L163 718M62 798L117 820M128 803L196 838 238 800M196 838L176 878 238 912 228 932 262 950 374 1010 350 1022 390 1118 372 1130 390 1185 328 1210M390 1185L432 1286 485 1265M320 785L360 886M62 1090L92 1057 210 1000 262 950 300 915 360 886 405 862 440 825 478 795 540 780 655 728 688 693 755 722 778 758M778 758L765 766 752 740 735 740 630 785 640 800 550 860C480 925 450 970 445 1060C450 1150 470 1190 485 1265L540 1350 572 1450 597 1477M778 756L870 722 935 720 1040 748 1090 748 1100 740 1240 780 1352 830 1370 818M778 758L778 860 705 1115 756 1245 860 1325 850 1375 835 1400 770 1472 688 1508 685 1525 622 1530 597 1477M756 1245L660 1380 597 1477 545 1560M835 1400L948 1480 975 1560M155 1030L188 1112M62 1010L92 1057M62 1058L80 1065M62 1005L90 990M62 1135L130 1160M116 1175L113 1350M62 1353L400 1356M308 1280L540 1440 572 1450M120 1356L110 1375 110 1545M176 1305L172 1545M238 1356L238 1478 268 1480 270 1555M320 1356L318 1558M62 1550L150 1545 270 1556M597 1477L560 1515 460 1560"/>
        </g>
        <g class="edge" transform="translate(2180 480) scale(.33333)">
          <path d="M0 1500L48 1480 225 1005 303 875 678 875 740 893 1105 992"/>
        </g>
        <g class="edge" transform="translate(1800 780) scale(.44643 .35461)">
          <path d="M45 48L100 42 190 50 305 82 432 8 372 110 390 130 440 122 463 185 463 235 452 315 458 335M432 8L436 0M82 0V42M128 0V42M200 0L203 52M237 0V62M455 0L465 30 512 22 515 8 530 0M305 82L330 102 260 152 230 195 175 320 175 405 200 455M45 80L98 76 88 108 120 158 118 250M45 290L95 253 180 248 160 330 125 390M180 248L175 320M45 235L105 370 145 425M100 366L52 400 68 438 45 450M45 487L75 482M390 130C340 150 325 190 325 290L320 370 310 455 293 542M325 290L410 302 437 290 452 315M410 302L395 345 310 455M310 460H378M518 372L577 318 583 330 645 320 655 308 760 290M580 330L576 485 590 590 617 672M712 0L768 210 760 290 762 602M222 520L232 538 262 530 295 545 340 602 375 680 435 702 455 750 500 835 562 930M262 530L266 735 220 795 217 865M340 602L430 535M485 525L490 665 495 690 485 715 450 745 318 875M495 700L510 718 525 708 617 672 762 602 888 548M768 602L1338 782M1338 795L690 950 682 965 630 870 562 930M525 708L615 890M560 787L440 890M45 560L130 655 160 625M130 655L100 705M45 600L60 712M45 718L115 706 133 840M45 808L160 860 195 872 305 856 312 872 400 915 530 980M195 872L208 993 130 1010M312 872L325 1000 323 1160 314 1162 310 1200 260 1205 253 1325 292 1480 360 1518 395 1520 415 1560M508 975L432 1035 450 1073 477 1050 520 1140 538 1190M60 1030L82 1200M110 1020L132 1188M45 1210L192 1178 153 1300 142 1245 78 1260 68 1208M153 1300L155 1335 208 1335 162 1568M565 1120L580 1165 455 1243 533 1518M632 1115L640 1125 655 1112 665 1162 755 1138M665 1090L825 1172 848 1200 882 1172 965 1210 1258 1333M665 1162L650 1168 662 1208 688 1200 693 1242 675 1250 683 1280 703 1285 735 1498M0 1525L8 1530 10 1568"/>
        </g>
        <g class="edge" transform="translate(1230 1290) scale(.33333)">
          <path d="M245 66L390 138 512 66M325 66L312 98M388 66L405 80 398 98 430 112M678 66L690 92 780 138M1180 68H1212M1235 66L1290 125 1312 138M1472 66L1498 138"/>
        </g>
        <g class="school">
          <circle cx="1866" cy="442" r="5"/><circle class="lit" cx="1923" cy="473.500" r="4.500"/><circle cx="1884" cy="542" r="5"/><circle class="lit" cx="1904" cy="537" r="5"/><circle cx="1984" cy="559.700" r="5"/><circle cx="1828" cy="601.700" r="5"/><circle cx="1956" cy="632" r="5"/><circle cx="1956" cy="638" r="5"/><circle cx="1958.300" cy="654" r="5"/><circle cx="1956" cy="650" r="5"/><circle cx="1830" cy="724" r="5"/><circle cx="1940" cy="745.700" r="5"/><circle cx="2026" cy="737.700" r="5"/><circle cx="1862.300" cy="755.700" r="5"/><circle cx="2318" cy="936.500" r="5"/><circle cx="1869.500" cy="1024" r="5"/><circle cx="2022" cy="1016" r="5"/><circle cx="1990" cy="1098" r="5"/><circle cx="2074" cy="1105" r="5"/>
        </g>
        <g class="buffer">
          <circle cx="1904" cy="501.300" r="34.700"/><circle cx="1874.300" cy="684" r="34.700"/><circle cx="1994.300" cy="681.700" r="34.700"/><circle cx="2309.500" cy="898.500" r="34.700"/><circle cx="2003" cy="934.500" r="34.700"/><circle cx="1864.500" cy="966.500" r="34.700"/><circle cx="1786.500" cy="899" r="34.700"/><circle cx="1839" cy="1107.500" r="34.700"/><circle cx="2069.500" cy="1142" r="34.700"/>
        </g>
      </svg>
    </main>
  </div>
</div>

<div class="dialog">
  <header class="dialog-title">
    <div class="lights"><i></i><i></i><i></i></div>
    <div class="caption">
      <svg class="qlogo" viewBox="0 0 28 32"><path d="M13 5Q2 6 4 17Q5 28 14 25L22 31L24 27L21 22Q24 18 22 12L18 17Q17 23 13 22Q8 20 9 14Q10 9 15 10Z" fill="#e2ee7f" stroke="#cdd98f"/><path d="M26 1L22 12L8 25L3 29L5 24L16 9Z" fill="#6aa072"/></svg>
      <span>Join attributes by location</span>
    </div>
  </header>
  <div class="dialog-body">
    <label class="lbl first">Target vector layer</label>
    <div class="combo"><span>BX_Library_QuarterMiBuffer</span><svg viewBox="0 0 33 39"><path d="M12 16L16.500 10L21 16M12 24L16.500 30L21 24"/></svg></div>
    <label class="lbl second">Join vector layer</label>
    <div class="combo lower"><span>Bronx_Schools</span><svg viewBox="0 0 33 39"><path d="M12 16L16.500 10L21 16M12 24L16.500 30L21 24"/></svg></div>
    <h3 class="group-name summary">Attribute Summary</h3>
    <div class="group attrs">
      <div class="radio-row"><i class="radio"></i><span>Take attributes of first located feature</span></div>
      <div class="radio-row"><i class="radio on"></i><span>Take summary of intersecting features</span></div>
      <div class="stats">
        <span class="stat mean"><svg class="cb on"><path d="M7 14L12 19L20 7"/></svg>Mean</span>
        <span class="stat min"><svg class="cb"></svg>Min</span>
        <span class="stat max"><svg class="cb"></svg>Max</span>
        <span class="stat sum"><svg class="cb on"><path d="M7 14L12 19L20 7"/></svg>Sum</span>
        <span class="stat"><svg class="cb"></svg>Median</span>
      </div>
      <i class="ring ring-radio"></i>
      <i class="ring ring-sum"></i>
    </div>
    <label class="lbl shape">Output Shapefile</label>
    <div class="file-row">
      <div class="path"><span>Data/Process/Library_QuartMiBuffer_SchoolsJoin.shp</span></div>
      <button class="btn browse">Browse</button>
    </div>
    <h3 class="group-name outtable">Output table</h3>
    <div class="group outs">
      <div class="radio-row"><i class="radio"></i><span>Only keep matching records</span></div>
      <div class="radio-row"><i class="radio on"></i><span>Keep all records (including non-matching target records)</span></div>
    </div>
    <div class="actions">
      <div class="progress"></div>
      <button class="btn close">Close</button>
      <button class="btn ok">OK</button>
    </div>
  </div>
  <svg class="sizer" viewBox="0 0 22 22"><path d="M1 21L21 1M8 21L21 8M15 21L21 15" stroke="#777" stroke-width="1.800"/></svg>
</div>
</body>
</html>
```
FILE: styles.css
```css
* { box-sizing: border-box; }
body {
  margin: 0;
  width: 2800px;
  height: 1336px;
  overflow: hidden;
  position: relative;
  background: #fff;
  font: 26px/30px "Liberation Sans", Arial, sans-serif;
  color: #000;
}
h1, h2, h3, ul { margin: 0; padding: 0; font-weight: normal; }
.defs { position: absolute; width: 0; height: 0; }

.t-one { font: bold 17px "Noto Sans", sans-serif; fill: #777; letter-spacing: -1px; }
.t-help { font: 32px "Liberation Serif", serif; fill: #fff; }
.t-abc { font: bold 15px "Noto Sans", sans-serif; fill: #333; letter-spacing: -.5px; }
.t-csw { font: bold 16px "Noto Sans", sans-serif; fill: #555; letter-spacing: -.5px; }

.window { display: flex; flex-direction: column; height: 1336px; }

.titlebar {
  height: 38px;
  flex: none;
  display: grid;
  grid-template-columns: 1fr auto 1fr;
  align-items: center;
  background: #f6f6f6;
  border-bottom: 2px solid #e0e0e0;
}
.titlebar-text {
  font: 26px/30px Inter, sans-serif;
  letter-spacing: .3px;
  color: #aaa;
  padding: 0 0 1px 3px;
}
.lights { display: flex; gap: 16px; padding-left: 16px; }
.lights i {
  width: 24px; height: 24px;
  border-radius: 50%;
  background: #dcdcdc;
  border: 1.5px solid #cdcdcd;
}
.titlebar .lights { padding-bottom: 4px; }

.toolbar {
  flex: none;
  height: 72px;
  display: flex;
  padding-left: 2px;
  background: linear-gradient(#ededed, #c8c8c8);
  border-top: 2px solid #fff;
  border-bottom: 2px solid #b0b0b0;
}
.grip {
  flex: none;
  width: 18px;
  position: relative;
}
.grip::before {
  content: "";
  position: absolute;
  left: 13px; top: 10px;
  width: 12px; height: 48px;
  background:
    radial-gradient(circle at 2px 2px, #fff 1.800px, transparent 2px) 0 0 / 12px 12px,
    radial-gradient(circle at 4px 4px, #b9b9b9 1.500px, transparent 2px) 0 0 / 12px 12px,
    radial-gradient(circle at 8px 8px, #fff 1.800px, transparent 2px) 0 0 / 12px 12px,
    radial-gradient(circle at 10px 10px, #b9b9b9 1.500px, transparent 2px) 0 0 / 12px 12px;
}
.tool {
  flex: none;
  width: 76px;
  height: 68px;
  display: flex;
  justify-content: center;
  align-items: center;
  position: relative;
}
.tool svg { width: 48px; height: 48px; }
.tool.menu { width: 100px; }
.tool.menu::after {
  content: "";
  position: absolute;
  left: 78px; top: 38px;
  border: 8px solid transparent;
  border-top: 15px solid #636363;
  border-bottom: 0;
}
.tool.dim svg { opacity: .5; }
.tool.pressed {
  background: linear-gradient(#d2d2d2, #a2a2a2);
  width: 68px;
  margin: 0 4px;
  box-shadow: inset 2px 0 #999, inset -2px 0 #999;
}

.work { flex: 1; display: flex; min-height: 0; }

.sidebar {
  flex: none;
  width: 94px;
  margin-left: 2px;
  box-shadow: -2px 0 #f8f8f8;
  background: linear-gradient(90deg, #ededed, #c8c8c8);
  border-right: 2px solid #b0b0b0;
  padding-top: 2px;
  display: flex;
  flex-direction: column;
}
.grip-h {
  flex: none;
  height: 18px;
  position: relative;
}
.grip-h::before {
  content: "";
  position: absolute;
  left: 12px; top: 10px;
  width: 72px; height: 12px;
  background:
    radial-gradient(circle at 2px 2px, #fff 1.800px, transparent 2px) 0 0 / 12px 12px,
    radial-gradient(circle at 4px 4px, #b9b9b9 1.500px, transparent 2px) 0 0 / 12px 12px,
    radial-gradient(circle at 8px 8px, #fff 1.800px, transparent 2px) 0 0 / 12px 12px,
    radial-gradient(circle at 10px 10px, #b9b9b9 1.500px, transparent 2px) 0 0 / 12px 12px;
}
.side {
  flex: none;
  height: 76px;
  display: flex;
  align-items: center;
  padding-left: 10px;
}
.side.wide { padding-left: 22px; }
.side svg { flex: none; width: 48px; height: 48px; }
.side b {
  margin: 23px 0 0 4px;
  border: 8px solid transparent;
  border-top: 15px solid #636363;
  border-bottom: 0;
}

.panel {
  flex: none;
  width: 685px;
  display: flex;
  flex-direction: column;
  border-right: 4px solid #999;
}
.panel-title {
  flex: none;
  height: 52px;
  display: flex;
  align-items: center;
  gap: 12px;
  padding: 0 0 4px 6px;
  background: linear-gradient(#ededed, #c8c8c8);
  border-top: 2px solid #fff;
  border-bottom: 2px solid #b0b0b0;
}
.pbtn { flex: none; width: 28px; height: 28px; }
.panel-title h2 {
  flex: 1;
  font-size: 22px;
  text-align: center;
  padding: 1px 7px 0 0;
}
.panel-tools {
  flex: none;
  height: 58px;
  display: flex;
  background: linear-gradient(#ededed, #c8c8c8);
  border-top: 2px solid #fff;
  border-bottom: 4px solid #999;
}
.ptool {
  width: 60px;
  height: 52px;
  display: flex;
  align-items: center;
  padding-left: 12px;
  position: relative;
}
.ptool svg { flex: none; width: 32px; height: 32px; }
.ptool svg.eye { width: 36px; }
.pmenu { width: 84px; padding-left: 26px; }
.pmenu::after {
  content: "";
  position: absolute;
  left: 61px; top: 28px;
  border: 8px solid transparent;
  border-top: 15px solid #636363;
  border-bottom: 0;
}
.tree {
  flex: 1;
  list-style: none;
  background: #fff;
  border-left: 2px solid #b0b0b0;
}
.tree li {
  height: 40px;
  display: flex;
  align-items: center;
  padding-left: 54px;
  font-weight: bold;
}
.tree li.current { background: #cfcfcf; }
.lname { margin-top: -1px; letter-spacing: -.03px; }
.current .lname { border-bottom: 2px solid #000; line-height: 24px; margin-top: 1px; }
.check {
  flex: none;
  width: 28px; height: 28px;
  border: 2px solid #d4d4d4;
  border-radius: 5px;
  background: #fff;
  margin-top: -1px;
}
.check path { fill: none; stroke: #959595; stroke-width: 3; transform: translate(-2px, -1px); }
.current .check { background: #e4e4e4; border-color: #b4b4b4; }
.sym {
  flex: none;
  width: 32px;
  margin: 0 12px 0 26px;
  display: flex;
  justify-content: center;
}
.sw { width: 32px; height: 32px; border: 2px solid #7a4d70; }
.pink { background: #eda3e8; }
.rose { background: #cc8c90; border-color: #6e4648; }
.pt { width: 13px; height: 13px; border-radius: 50%; border: 2px solid #6b766b; }
.green { background: #8a9f7c; }
.wine { background: #831f45; border-color: #3c1526; }

.canvas {
  flex: 1;
  min-width: 0;
  overflow: hidden;
  background: #fff;
  border-top: 2px solid #8f8f8f;
}
.map { display: block; width: 2019px; height: 1152px; }
.land { fill: #cc8c90; stroke: #3d3434; stroke-width: 2; }
.edge path { fill: none; stroke: #2b2020; stroke-width: 2; vector-effect: non-scaling-stroke; }
.school circle { fill: #839451; stroke: #11150a; stroke-width: 2; }
.school .lit { fill: #e0dc1c; }
.buffer circle { fill: #eda3e8; stroke: #5b3a5e; stroke-width: 2; }

.dialog {
  position: absolute;
  left: 941px; top: 218px;
  width: 879px; height: 1095px;
  border-radius: 10px;
  background: #ebebeb;
  box-shadow: 0 0 0 1px rgba(0, 0, 0, .14), 0 22px 50px rgba(0, 0, 0, .38);
}
.dialog-title {
  height: 43px;
  display: flex;
  align-items: center;
  background: #f6f6f6;
  border-bottom: 2px solid #e2e2e2;
  border-radius: 10px 10px 0 0;
}
.dialog-title .lights { padding: 3px 0 0 17px; }
.caption {
  display: flex;
  align-items: center;
  gap: 9px;
  margin-left: 142px;
  padding-top: 5px;
  font: 25px/30px Inter, sans-serif;
  letter-spacing: .33px;
  color: #aaa;
}
.qlogo { width: 28px; height: 32px; margin-top: -3px; }
.dialog-body { padding: 37px 40px 0 41px; }

.lbl { display: block; height: 30px; padding-left: 5px; }
.lbl.second { margin-top: 21px; }
.lbl.shape { margin-top: 48px; padding-left: 0; }

.combo {
  display: flex;
  width: 788px;
  height: 41px;
  margin: 17px 0 0 4px;
  background: #fff;
  border: 2px solid #c9c9c9;
  border-bottom-color: #adadad;
  border-radius: 7px;
  overflow: hidden;
}
.combo.lower { margin-top: 17px; }
.combo span { flex: 1; padding-left: 16px; line-height: 29px; }
.combo svg { flex: none; width: 34px; height: 39px; background: #d3d3d3; }
.combo path { fill: none; stroke: #fff; stroke-width: 2.5; }

.group-name { height: 30px; padding-left: 16px; font-weight: bold; font-size: 26px; color: #1a1a1a; }
.summary { margin-top: 5px; }
.outtable { margin-top: 15px; }
.group {
  position: relative;
  width: 798px;
  background: #e4e4e4;
  border: 2px solid #b9b9b9;
  border-radius: 8px;
}
.attrs { height: 169px; margin-top: 10px; padding: 17px 0 0 22px; }
.outs { height: 110px; margin-top: 10px; padding: 18px 0 0 22px; }
.radio-row { display: flex; gap: 8px; height: 34px; line-height: 34px; }
.radio {
  flex: none;
  width: 31px; height: 31px;
  margin-top: 6px;
  border-radius: 50%;
  background: #fff;
  border: 2px solid #b5b5b5;
}
.radio.on { background: radial-gradient(circle, #fff 4px, #dedede 5px, #f2f2f2 7px); }
.stats { display: flex; margin: 17px 0 0 110px; }
.stat { display: flex; gap: 9px; line-height: 31px; }
.cb {
  width: 27px; height: 27px;
  margin-top: 5px;
  background: #fff;
  border: 2px solid #b9b9b9;
  border-radius: 5px;
}
.cb.on { background: #f1f1f1; }
.cb path { fill: none; stroke: #cfcfcf; stroke-width: 2.5; transform: translate(-2px, -2px); }
.mean { width: 119px; }
.min { width: 94px; }
.max { width: 101px; }
.sum { width: 107px; }
.ring {
  position: absolute;
  width: 64px; height: 64px;
  border: 4px solid #ee5cf2;
  border-radius: 50%;
}
.ring-radio { left: 11px; top: 50px; }
.ring-sum { left: 429px; top: 88px; }

.file-row { display: flex; justify-content: space-between; width: 785px; margin-top: 36px; }
.path {
  width: 622px; height: 41px;
  display: flex;
  justify-content: flex-end;
  overflow: hidden;
  background: #fff;
  border: 2px solid #d0d0d0;
  border-left: 0;
  padding-right: 10px;
}
.path span { white-space: nowrap; line-height: 34px; }
.btn {
  height: 41px;
  padding: 0 0 8px;
  font: inherit;
  line-height: 29px;
  color: #000;
  background: #fff;
  border: 2px solid #cbcbcb;
  border-bottom-color: #a9a9a9;
  border-radius: 7px;
}
.browse { width: 147px; }
.actions { display: flex; width: 785px; margin-top: 186px; }
.progress {
  width: 370px; height: 12px;
  margin: 16px 120px 0 1px;
  background: #d6d6d6;
  border: 2px solid #bdbdbd;
  border-radius: 5px;
}
.close { width: 128px; margin-right: 28px; }
.ok { width: 138px; }
.sizer { position: absolute; right: 1px; bottom: 2px; width: 22px; height: 22px; }
```
